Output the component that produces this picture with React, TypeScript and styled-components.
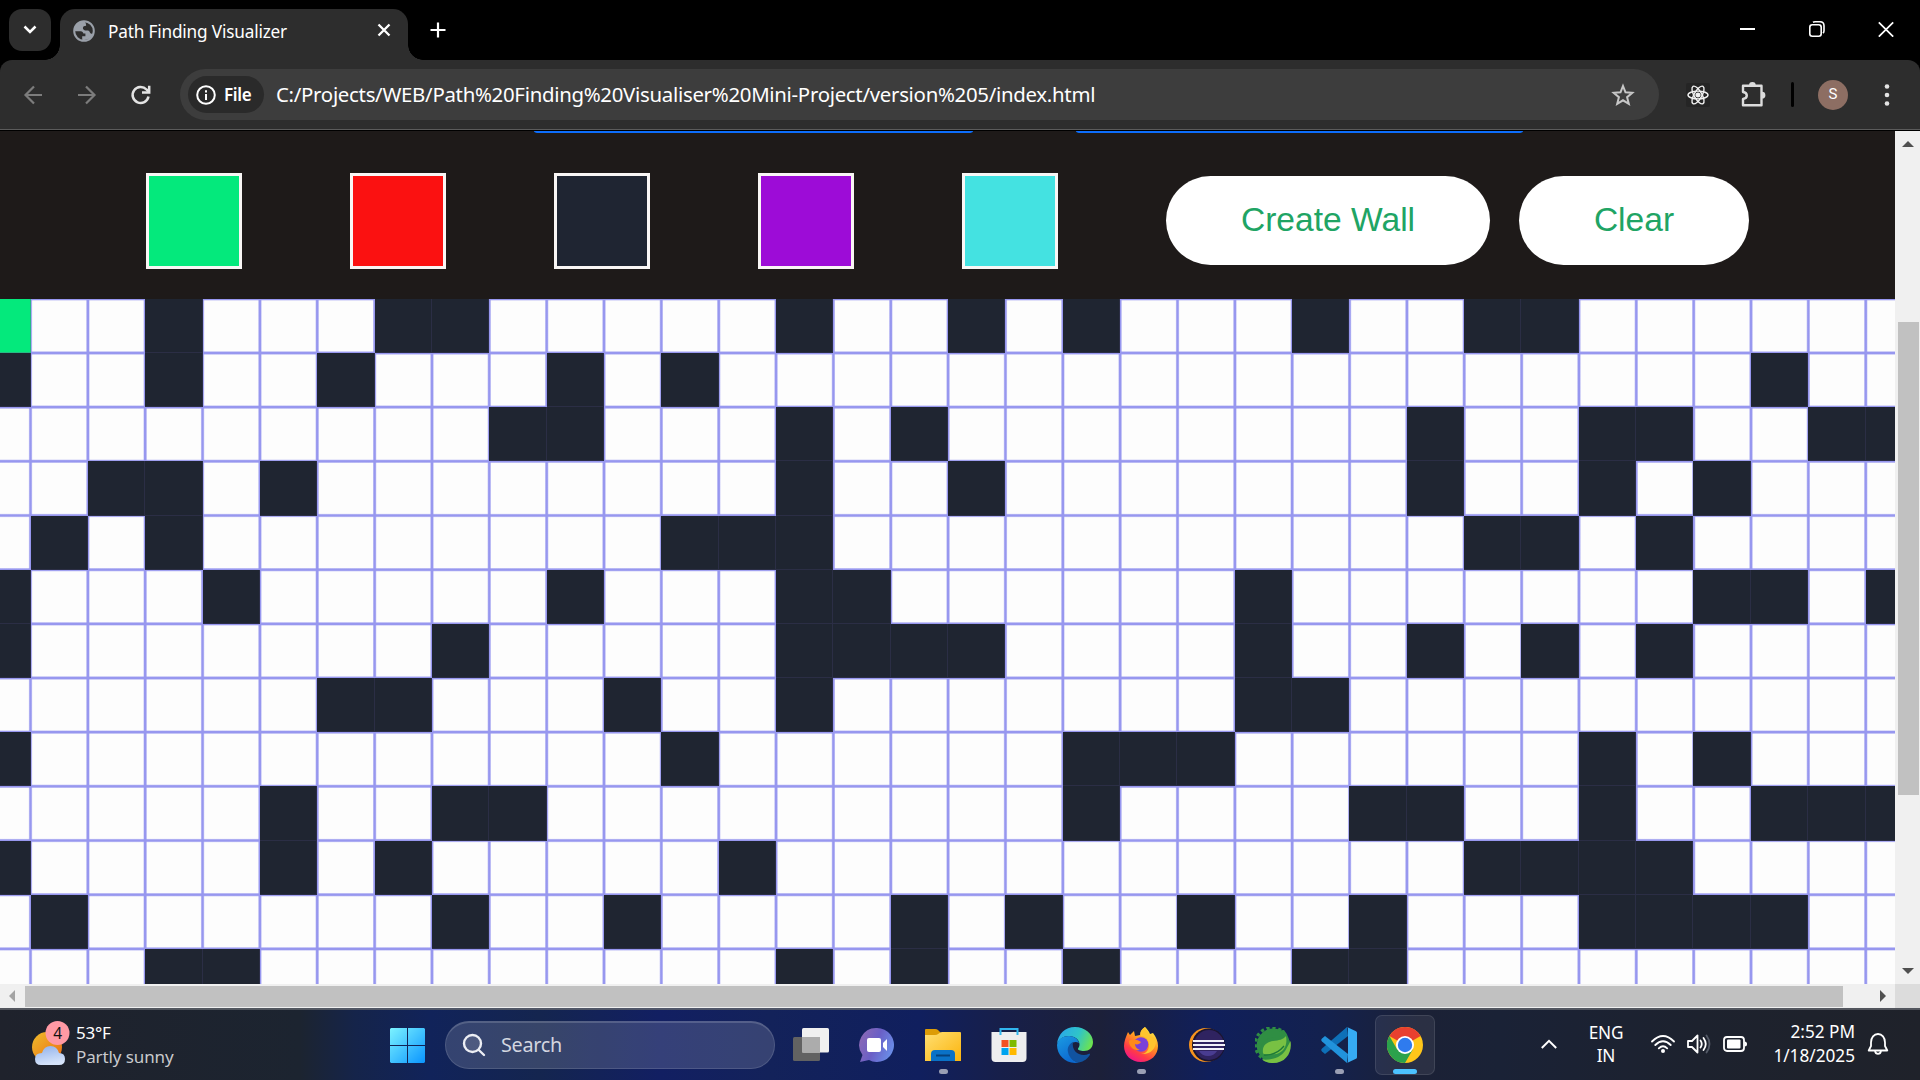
import React from "react";
import styled, { createGlobalStyle } from "styled-components";

const ui = `"Noto Sans", "Open Sans", sans-serif`;

const GlobalStyle = createGlobalStyle`
  * { box-sizing: border-box; }
  body { margin: 0; background: #000; overflow: hidden; }
  svg { display: block; flex: none; }
`;

const Screen = styled.div`
  width: 1920px;
  height: 1080px;
  display: flex;
  flex-direction: column;
  overflow: hidden;
  background: #000;
  font-family: ${ui};
`;

/* ---------- browser chrome ---------- */

const TabStrip = styled.div`
  height: 60px;
  flex: none;
  display: flex;
  padding: 9px 0 0 9px;
  color: #fff;
`;

const TabSearch = styled.div`
  width: 42px;
  height: 42px;
  border-radius: 13px;
  background: #2d2d2d;
  display: grid;
  place-items: center;
`;

const Tab = styled.div`
  position: relative;
  width: 348px;
  height: 51px;
  margin-left: 9px;
  padding: 0 16px 8px 13px;
  border-radius: 15px 15px 0 0;
  background: #2d2d2d;
  display: flex;
  align-items: center;
  &::before,
  &::after {
    content: "";
    position: absolute;
    bottom: 0;
    width: 15px;
    height: 15px;
  }
  &::before {
    left: -15px;
    background: radial-gradient(circle at 0 0, transparent 14.5px, #2d2d2d 15px);
  }
  &::after {
    right: -15px;
    background: radial-gradient(circle at 100% 0, transparent 14.5px, #2d2d2d 15px);
  }
`;

const TabTitle = styled.span`
  flex: 1;
  margin-left: 13px;
  padding-top: 3px;
  font-size: 17.2px;
  line-height: 24px;
  letter-spacing: -0.17px;
  white-space: nowrap;
`;

const NewTab = styled.div`
  margin: 13px 0 0 22px;
`;

const WindowControls = styled.div`
  margin: 12px 26px 0 auto;
  display: flex;
  gap: 53px;
`;

const Toolbar = styled.div`
  height: 71px;
  flex: none;
  display: flex;
  align-items: center;
  padding-bottom: 1px;
  background: #2d2d2d;
  border-top-left-radius: 12px;
  border-top-right-radius: 12px;
  border-bottom: 1px solid #000;
  box-shadow: inset 0 -1px 0 #5b5b5b;
`;

const NavButtons = styled.div`
  width: 180px;
  flex: none;
  display: flex;
  align-items: center;
  padding-left: 21px;
  gap: 28px;
`;

const Omnibox = styled.div`
  width: 1479px;
  height: 51px;
  flex: none;
  border-radius: 26px;
  background: #3d3d3d;
  display: flex;
  align-items: center;
  padding: 0 24px 0 8px;
  color: #fff;
`;

const FileChip = styled.div`
  width: 76px;
  height: 37px;
  border-radius: 19px;
  background: #2a2a2a;
  display: flex;
  align-items: center;
  padding-left: 8px;
  font-size: 17px;
  font-weight: 600;
  letter-spacing: -0.3px;
  gap: 8px;
`;

const Url = styled.span`
  flex: 1;
  margin-left: 12px;
  padding-bottom: 2px;
  font-size: 20.4px;
  letter-spacing: -0.29px;
  white-space: nowrap;
`;

const ToolbarActions = styled.div`
  flex: 1;
  display: flex;
  align-items: center;
  padding-left: 27px;
`;

const ExtensionBadge = styled.div`
  width: 24px;
  height: 24px;
  margin-right: 31px;
  background: #252525;
  border-radius: 2px;
  display: grid;
  place-items: center;
`;

const ToolbarDivider = styled.div`
  width: 3px;
  height: 25px;
  margin-left: 24px;
  border-radius: 2px;
  background: #000;
`;

const Avatar = styled.div`
  width: 30px;
  height: 30px;
  margin: 0 36px 0 24px;
  border-radius: 50%;
  background: #8d6e63;
  color: #fff;
  display: grid;
  place-items: center;
  font: 15px/1 Roboto, sans-serif;
`;

/* ---------- page ---------- */

const Viewport = styled.div`
  height: 877px;
  flex: none;
  display: grid;
  grid-template-columns: 1895px 25px;
  grid-template-rows: 853px 24px;
`;

const Page = styled.div`
  overflow: hidden;
  background: #1e1a19;
`;

const Header = styled.div`
  height: 168px;
`;

const ActionRow = styled.div`
  height: 2px;
  display: flex;
  gap: 103px;
  padding-left: 534px;
`;

const ActionEdge = styled.div<{ $width: number }>`
  width: ${(p) => p.$width}px;
  height: 2px;
  background: #0d6efd;
  border-radius: 0 0 5px 5px / 0 0 2px 2px;
`;

const Legend = styled.div`
  display: flex;
  align-items: center;
  padding: 40px 0 0 146px;
`;

const Swatch = styled.div<{ $color: string }>`
  width: 96px;
  height: 96px;
  margin-right: 108px;
  border: 3px solid #f9f6f5;
  background: ${(p) => p.$color};
`;

const PillButton = styled.button<{ $width: number }>`
  width: ${(p) => p.$width}px;
  height: 89px;
  margin: 0 29px 1px 0;
  padding: 0 0 1px;
  border: 0;
  border-radius: 45px;
  background: #fff;
  color: #20a464;
  font: 33.6px/1 "Liberation Sans", Arial, sans-serif;
`;

const line = "#9797ef";
const clear = "rgba(151, 151, 239, 0)";

const Board = styled.div`
  height: 685px;
  overflow: hidden;
  display: grid;
  grid-template-columns: 30.5px repeat(33, 57.35px);
  grid-template-rows: repeat(13, 54.17px);
  background-color: #fdfdfd;
  background-image:
    repeating-linear-gradient(90deg, ${line} 0 0.7px, ${clear} 2.1px 55.25px, ${line} 56.65px 57.35px),
    repeating-linear-gradient(180deg, ${line} 0 0.7px, ${clear} 2.1px 52.07px, ${line} 53.47px 54.17px);
  background-position: -26.85px 0, 0 -0.2px;
  background-size: 2000px 100%, 100% 800px;
`;

const Cell = styled.div<{ $row: number; $col: number; $start?: boolean }>`
  grid-row: ${(p) => p.$row + 1};
  grid-column: ${(p) => p.$col + 1};
  background: ${(p) => (p.$start ? "#04e97c" : "#1f2531")};
  box-shadow: inset -1px -1px 0 ${(p) => (p.$start ? "#28b985" : "#2b2e45")};
`;

const ScrollTrack = styled.div<{ $horizontal?: boolean }>`
  display: flex;
  flex-direction: ${(p) => (p.$horizontal ? "row" : "column")};
  align-items: center;
  justify-content: space-between;
  background: #f0f0f0;
  padding: ${(p) => (p.$horizontal ? "0 9px" : "10px 0")};
`;

const VThumb = styled.div`
  width: 21px;
  height: 473px;
  margin: 175px 0 auto 1px;
  background: #c1c1c1;
`;

const HThumb = styled.div`
  width: 1818px;
  height: 21px;
  margin: 1px auto 0 10px;
  background: #c1c1c1;
`;

const ScrollCorner = styled.div`
  background: #dcdcdc;
`;

/* ---------- taskbar ---------- */

const Taskbar = styled.div`
  flex: 1;
  display: flex;
  align-items: center;
  border-top: 2px solid rgba(96, 100, 108, 0.8);
  background: linear-gradient(
    90deg,
    #1f222c 0,
    #1c2430 300px,
    #15244a 355px,
    #11235a 430px,
    #14254f 540px,
    #121f62 660px,
    #13225a 770px,
    #101f5e 920px,
    #171f4a 1000px,
    #1c2039 1100px,
    #101f5b 1210px,
    #13214f 1320px,
    #1b2136 1420px,
    #1a2236 1500px,
    #1d222e 1700px,
    #1f222a 1920px
  );
  background-origin: border-box;
  color: #fff;
`;

const Weather = styled.div`
  width: 390px;
  display: flex;
  padding-left: 30px;
  gap: 6px;
`;

const WeatherText = styled.div`
  font-size: 17px;
  line-height: 24px;
  letter-spacing: -0.2px;
`;

const Muted = styled.div`
  color: #c9cacd;
  letter-spacing: -0.1px;
`;

const SearchBox = styled.div`
  width: 330px;
  height: 48px;
  margin-left: 20px;
  border-radius: 24px;
  border: 1px solid rgba(255, 255, 255, 0.12);
  border-top: 2px solid rgba(255, 255, 255, 0.16);
  background: rgba(255, 255, 255, 0.15);
  display: flex;
  align-items: center;
  padding: 0 0 2px 16px;
  gap: 15px;
  color: #d3d6e0;
  font-size: 19.8px;
  letter-spacing: -0.3px;
`;

const Apps = styled.div`
  display: flex;
  gap: 6px;
  margin-left: 6px;
`;

const AppTile = styled.div<{ $active?: boolean }>`
  position: relative;
  width: 60px;
  height: 60px;
  margin-bottom: 1px;
  display: grid;
  place-items: center;
  border-radius: 7px;
  border: 1px solid ${(p) => (p.$active ? "rgba(255,255,255,0.1)" : "transparent")};
  background: ${(p) => (p.$active ? "rgba(255,255,255,0.07)" : "transparent")};
`;

const Indicator = styled.div<{ $active?: boolean }>`
  position: absolute;
  bottom: 0;
  left: calc(50% - ${(p) => (p.$active ? 12 : 4.5)}px);
  width: ${(p) => (p.$active ? 24 : 9)}px;
  height: 5px;
  border-radius: 3px;
  background: ${(p) => (p.$active ? "#4cc2ff" : "#9a9fb4")};
`;

const Tray = styled.div`
  display: flex;
  flex: 1;
  align-items: center;
  justify-content: flex-end;
  padding: 0 31px 2px 0;
  font-size: 17.2px;
  line-height: 24px;
  letter-spacing: -0.25px;
`;

const Language = styled.div`
  width: 60px;
  margin: 0 15px 0 19px;
  text-align: center;
  line-height: 23px;
`;

const Status = styled.div`
  display: flex;
  gap: 12px;
`;

const Clock = styled.div`
  width: 108px;
  margin-right: 12px;
  text-align: right;
  letter-spacing: 0;
`;

const walls: number[][] = [
  [3, 7, 8, 14, 17, 19, 23, 26, 27],
  [0, 3, 6, 10, 12, 31],
  [9, 10, 14, 16, 25, 28, 29, 32, 33],
  [2, 3, 5, 14, 17, 25, 28, 30],
  [1, 3, 12, 13, 14, 26, 27, 29],
  [0, 4, 10, 14, 15, 22, 30, 31, 33],
  [0, 8, 14, 15, 16, 17, 22, 25, 27, 29],
  [6, 7, 11, 14, 22, 23],
  [0, 12, 19, 20, 21, 28, 30],
  [5, 8, 9, 19, 24, 25, 28, 31, 32, 33],
  [0, 5, 7, 13, 26, 27, 28, 29],
  [1, 8, 11, 16, 18, 21, 24, 28, 29, 30, 31],
  [3, 4, 14, 16, 19, 23, 24],
];

const swatches = ["#04e97c", "#fb1111", "#1f2532", "#9d0cd7", "#44e2e1"];

const Arrow = ({ dir, color = "#505050" }: { dir: "up" | "down" | "left" | "right"; color?: string }) => {
  const points = { up: "0,6 6,0 12,6", down: "0,0 12,0 6,6", left: "6,0 6,12 0,6", right: "0,0 6,6 0,12" }[dir];
  const tall = dir === "left" || dir === "right";
  return (
    <svg width={tall ? 6 : 12} height={tall ? 12 : 6}>
      <polygon points={points} fill={color} />
    </svg>
  );
};

const Globe = () => (
  <svg width="22" height="22" viewBox="0 0 22 22">
    <circle cx="11" cy="11" r="9.8" fill="#2d2d2d" stroke="#9aa0a9" strokeWidth="2" />
    <path d="M11.5 1.2C5 1 1 6 1.2 11.2h6.6c1.5.1 2.4 1 2.6 2.4h2v2.6H9.2v3.6c4.5 1 9.4-1.600 11.200-6.200-1.500.3-3 .1-3.600-1.400-.6-1.300-1.700-1.700-3.300-1.600-2.300-.1-3.700-1-3.600-2.600.1-1.600 1.300-2.200 3.200-2.300.2-1.500-.4-2.700-1.600-4.500z" fill="#9aa0a9" />
  </svg>
);

const Chat = () => (
  <svg width="36" height="36" viewBox="0 0 36 36">
    <defs>
      <linearGradient id="chat" x1="0" y1="0.2" x2="1" y2="0.6">
        <stop offset="0" stopColor="#8d69b4" />
        <stop offset="0.5" stopColor="#6a5fc6" />
        <stop offset="1" stopColor="#6a8ee8" />
      </linearGradient>
    </defs>
    <path d="M18 1a17 17 0 1 1-8 32L1 35l2.500-7A17 17 0 0 1 18 1z" fill="url(#chat)" />
    <rect x="8" y="11" width="14" height="14" rx="2" fill="#fff" />
    <path d="M24 16l4-4v12l-4-4z" fill="#fff" />
  </svg>
);

const Folder = () => (
  <svg width="36" height="36" viewBox="0 0 36 36">
    <defs>
      <linearGradient id="fold" x1="0" y1="0" x2="1" y2="1">
        <stop offset="0" stopColor="#ffdf73" />
        <stop offset="1" stopColor="#fbb40c" />
      </linearGradient>
    </defs>
    <path d="M0 3q0-1 1-1h9q2 0 3 1l3 3v4H0z" fill="#dd9c06" />
    <path d="M0 8h10q2 0 3.500-1.300T17 5h18q1 0 1 1v28H0z" fill="url(#fold)" />
    <path d="M6 34V27q0-4 4-4h16q4 0 4 4v7z" fill="#0a72c7" />
    <path d="M11 28.500h14" stroke="#06427c" strokeWidth="2" />
  </svg>
);

const Store = () => (
  <svg width="36" height="36" viewBox="0 0 36 36">
    <path d="M9.500 8V2h17v6" stroke="#31b6ee" strokeWidth="2" fill="none" />
    <path d="M.5 5h35v26q0 4-4 4h-27q-4 0-4-4z" fill="#eeeeef" />
    <path d="M9.500 8V5m17 3V5" stroke="#31b6ee" strokeWidth="2" />
    <path fill="#f25022" d="M10.500 13h7v7h-7z" />
    <path fill="#7fba00" d="M18.500 13h7v7h-7z" />
    <path fill="#00a4ef" d="M10.500 21h7v7h-7z" />
    <path fill="#ffb900" d="M18.500 21h7v7h-7z" />
  </svg>
);

const Edge = () => (
  <svg width="36" height="36" viewBox="0 0 36 36">
    <defs>
      <linearGradient id="edgeTop" x1="0" y1="0.3" x2="1" y2="0.6">
        <stop offset="0" stopColor="#2aa7ea" />
        <stop offset="0.55" stopColor="#2fc4c8" />
        <stop offset="1" stopColor="#6de34f" />
      </linearGradient>
      <linearGradient id="edgeLow" x1="0" y1="0" x2="0.5" y2="1">
        <stop offset="0" stopColor="#1b9be2" />
        <stop offset="1" stopColor="#0c69d0" />
      </linearGradient>
    </defs>
    <path d="M0 17C1 7 8 0 18 0s18 7 18 15c0 6-4 9-9 9-4 0-6.500-1-6-2.500 1-1.300 1.500-2.500 1.500-4C22.500 13 18 9 12 9 6 9 2 12 0 17z" fill="url(#edgeTop)" />
    <path d="M0 18C1 12 6 9 12 9c5 0 9 3 10 7-5-3-10 1-10 7 0 7 5 12 10 12.500C10 38 0 29 0 18z" fill="url(#edgeLow)" />
    <path d="M16 15c-4 2-6 6-5 10 1 6 6 10 11 10.500 5-1 9-4 11-8 .3-1-.4-1-1-.7C24 30.500 14 25 16 15z" fill="#1153a0" />
  </svg>
);

const Firefox = () => (
  <svg width="36" height="36" viewBox="0 0 36 36">
    <defs>
      <linearGradient id="ffx" x1="0.85" y1="0.05" x2="0.3" y2="1">
        <stop offset="0" stopColor="#fff24a" />
        <stop offset="0.4" stopColor="#ff9a1f" />
        <stop offset="0.75" stopColor="#ff3b47" />
        <stop offset="1" stopColor="#f0158a" />
      </linearGradient>
    </defs>
    <path d="M22 0c2 2 4 4 5 7l3-1c3 4 5 8 5 13 0 9-7 16-17 16S1 28 1 19c0-5 2-9 4-14l2 3 4-4 1 5 5-1c0-4 2-6 5-8z" fill="url(#ffx)" />
    <circle cx="18" cy="17.500" r="7.300" fill="#7a41d8" />
    <path d="M6 14c3-2 7-2 12 1-1 2-4 3-6 2 0 3 2 5 5 6-6 1-11-3-11-9z" fill="#ff8a1a" />
    <path d="M22 0c-4 3-5 6-4 9 5 0 8 4 8 9 0 6-4 9-8 9 9 1 15-5 15-13-1-2-2-3-3-4l-2 1c-1-4-4-6-6-11z" fill="#ffc52e" />
  </svg>
);

const Eclipse = () => (
  <svg width="36" height="36" viewBox="0 0 36 36">
    <circle cx="17" cy="18" r="17" fill="#f7941e" />
    <circle cx="19.500" cy="18" r="16.500" fill="#1b1530" />
    <circle cx="20" cy="18" r="15" fill="#2f2360" />
    <path d="M10 24h18q-3 5-9 5t-9-5z" fill="#493c90" />
    <path d="M4 14h31M4 18h32M4 22h31" stroke="#f1f1f7" strokeWidth="2" />
  </svg>
);

const Spring = () => (
  <svg width="36" height="36" viewBox="0 0 36 36">
    <path d="M29 3q3 3.500 4.500 8A16.700 16.700 0 1 1 26 3.300L29 3z" fill="#2f8e43" />
    <path d="M26 3.300A16.700 16.700 0 1 0 8 31.500" fill="none" stroke="#2f8e43" strokeWidth="3.200" strokeDasharray="3.200 2.700" />
    <path d="M8 16C11 11 17 10 23 10q4-1 6-4 4 4 6 9c1 11-7 21-17 21-4 0-8-1-10-3l-1-3C5 25 5 20 8 16z" fill="#2f8e43" />
    <path d="M8 26c-1-7 3-11 10-12 6-.5 10-1.500 13-5 1.500 8-1 15-8 17.500-5 1.500-10 .5-14 1z" fill="#78c143" />
    <path d="M35.500 14C37.500 25 31 36 18 36c-4 0-8-1-11-3.500 12 1 21-3 25-12q2-3.500 3.500-6.500z" fill="#78c143" />
    <path d="M9 28c8 .5 15-3 20-9" stroke="#1c7838" strokeWidth="1.300" fill="none" />
  </svg>
);

const VsCode = () => (
  <svg width="36" height="36" viewBox="0 0 36 36">
    <path d="M27 9L4 27 1 24.500Q-.5 23 1 21.500L26 0z" fill="#0e70b8" />
    <path d="M27 27L4 9 1 11.500Q-.5 13 1 14.500L26 36z" fill="#2193dc" />
    <path d="M26 0l9 4.300q1 .5 1 1.500v24.400q0 1-1 1.500L26 36q1-.5 1-2V2q0-1.500-1-2z" fill="#36abf3" />
  </svg>
);

const Chrome = () => (
  <svg width="36" height="36" viewBox="0 0 36 36">
    <circle cx="18" cy="18" r="18" fill="#ffc61a" />
    <path d="M18 18L2.410 9A18 18 0 0 1 33.590 9z" fill="#e8402f" />
    <path d="M2.410 9A18 18 0 0 0 18 36l7.800-13.500L10.200 22.500z" fill="#2ba24c" />
    <circle cx="18" cy="18" r="9" fill="#fff" />
    <circle cx="18" cy="18" r="7.200" fill="#2f7bee" />
  </svg>
);

const TaskView = () => (
  <svg width="36" height="36" viewBox="0 0 36 36">
    <rect x="0" y="10" width="27" height="24" rx="1.500" fill="#626262" />
    <rect x="9" y="1" width="27" height="24.500" rx="1.500" fill="#f0f0f0" />
    <path d="M9 10h18v15.500H9z" fill="#acacac" />
  </svg>
);

const apps: { icon: React.ReactNode; running?: boolean; active?: boolean }[] = [
  { icon: <TaskView /> },
  { icon: <Chat /> },
  { icon: <Folder />, running: true },
  { icon: <Store /> },
  { icon: <Edge /> },
  { icon: <Firefox />, running: true },
  { icon: <Eclipse /> },
  { icon: <Spring /> },
  { icon: <VsCode />, running: true },
  { icon: <Chrome />, running: true, active: true },
];

const WeatherIcon = () => (
  <svg width="40" height="48" viewBox="0 0 40 48">
    <defs>
      <linearGradient id="sun" x1="0" y1="0" x2="1" y2="1">
        <stop offset="0" stopColor="#eebd2c" />
        <stop offset="1" stopColor="#ec6a12" />
      </linearGradient>
      <linearGradient id="cloud" x1="0" y1="0" x2="0.3" y2="1">
        <stop offset="0" stopColor="#8fb0ea" />
        <stop offset="1" stopColor="#d5e3fa" />
      </linearGradient>
    </defs>
    <circle cx="17" cy="26" r="15" fill="url(#sun)" />
    <path d="M11 44q-6 0-6-6t7-6q2-7 8.500-7t8.500 7q6 0 6 6t-6 6z" fill="url(#cloud)" />
    <circle cx="27.500" cy="12" r="12" fill="#ff99a4" />
    <text x="27.800" y="17.500" textAnchor="middle" fontSize="15.500" fill="#111" fontFamily="Noto Sans, sans-serif">4</text>
  </svg>
);

export default function App() {
  return (
    <Screen>
      <GlobalStyle />
      <TabStrip>
        <TabSearch>
          <svg width="14" height="10" fill="none" stroke="#fff" strokeWidth="2.500">
            <path d="M1.500 1.500L7 7l5.500-5.500" />
          </svg>
        </TabSearch>
        <Tab>
          <Globe />
          <TabTitle>Path Finding Visualizer</TabTitle>
          <svg width="16" height="16" stroke="#fff" strokeWidth="2.300">
            <path d="M2.500 1.500l11 11m0-11l-11 11" />
          </svg>
        </Tab>
        <NewTab>
          <svg width="16" height="16" stroke="#fff" strokeWidth="2.200">
            <path d="M8 .5v15M.5 8h15" />
          </svg>
        </NewTab>
        <WindowControls>
          <svg width="16" height="16"><path d="M0 8h15" stroke="#fff" strokeWidth="2" /></svg>
          <svg width="16" height="16" fill="none" stroke="#fff" strokeWidth="1.600">
            <rect x=".8" y="3.800" width="11.400" height="11.400" rx="2.500" />
            <path d="M4 1.300q.8-.5 2-.5h5q4 0 4 4v5q0 1.500-1 2.400" />
          </svg>
          <svg width="16" height="16" stroke="#fff" strokeWidth="1.700"><path d="M.8 1.300l14.400 14.400m0-14.400L.8 15.700" /></svg>
        </WindowControls>
      </TabStrip>

      <Toolbar>
        <NavButtons>
          <svg width="25" height="24" fill="none" stroke="#7c7c7c" strokeWidth="2.200"><path d="M21 12H5m8-8.500L4.500 12l8.500 8.500" /></svg>
          <svg width="25" height="24" fill="none" stroke="#7c7c7c" strokeWidth="2.200"><path d="M4 12h16m-8-8.500l8.500 8.500-8.500 8.500" /></svg>
          <svg width="25" height="24" fill="none" stroke="#e3e3e3" strokeWidth="2.500">
            <path d="M21.500 13.500A8 8 0 1 1 19.500 6.500L22 9" />
            <path d="M22.200 2.800V9.600h-7.200" />
          </svg>
        </NavButtons>
        <Omnibox>
          <FileChip>
            <svg width="20" height="20" fill="none" stroke="#fff" strokeWidth="2">
              <circle cx="10" cy="10" r="8.800" />
              <path d="M10 9v6M10 5.200v2.200" />
            </svg>
            File
          </FileChip>
          <Url>C:/Projects/WEB/Path%20Finding%20Visualiser%20Mini-Project/version%205/index.html</Url>
          <svg width="24" height="24" viewBox="0 0 24 24" fill="none" stroke="#c7c7c7" strokeWidth="2">
            <path d="M12 3l2.500 6.300 6.800.5-5.200 4.400 1.700 6.700-5.800-3.600-5.800 3.600 1.700-6.700-5.200-4.400 6.800-.5z" />
          </svg>
        </Omnibox>
        <ToolbarActions>
          <ExtensionBadge>
            <svg width="22" height="22" viewBox="-11 -11 22 22" fill="none" stroke="#f2f2f2" strokeWidth="1.400">
              <ellipse rx="10" ry="3.900" />
              <ellipse rx="10" ry="3.900" transform="rotate(60)" />
              <ellipse rx="10" ry="3.900" transform="rotate(120)" />
              <circle r="1.900" fill="#f2f2f2" />
            </svg>
          </ExtensionBadge>
          <svg width="26" height="26" viewBox="0 1 26 26">
            <path d="M2 4.800h18.500v19.400H2V18q3.800-.6 3.800-3.500T2 11z" fill="none" stroke="#dcdcdc" strokeWidth="2.400" strokeLinejoin="round" />
            <path d="M8 4.500a3.400 3.400 0 0 1 6.800 0zM21 10.800a3.400 3.400 0 0 1 0 6.800z" fill="#dcdcdc" />
          </svg>
          <ToolbarDivider />
          <Avatar>S</Avatar>
          <svg width="6" height="24" fill="#e3e3e3">
            <circle cx="3" cy="3.500" r="2.300" /><circle cx="3" cy="12" r="2.300" /><circle cx="3" cy="20.500" r="2.300" />
          </svg>
        </ToolbarActions>
      </Toolbar>

      <Viewport>
        <Page>
          <Header>
            <ActionRow>
              <ActionEdge $width={439} />
              <ActionEdge $width={447} />
            </ActionRow>
            <Legend>
              {swatches.map((c) => <Swatch key={c} $color={c} />)}
              <PillButton $width={324}>Create Wall</PillButton>
              <PillButton $width={230}>Clear</PillButton>
            </Legend>
          </Header>
          <Board>
            <Cell $row={0} $col={0} $start />
            {walls.flatMap((cols, r) => cols.map((c) => <Cell key={`${r}-${c}`} $row={r} $col={c} />))}
          </Board>
        </Page>
        <ScrollTrack>
          <Arrow dir="up" />
          <VThumb />
          <Arrow dir="down" />
        </ScrollTrack>
        <ScrollTrack $horizontal>
          <Arrow dir="left" color="#a3a3a3" />
          <HThumb />
          <Arrow dir="right" />
        </ScrollTrack>
        <ScrollCorner />
      </Viewport>

      <Taskbar>
        <Weather>
          <WeatherIcon />
          <WeatherText>
            <div>53°F</div>
            <Muted>Partly sunny</Muted>
          </WeatherText>
        </Weather>
        <svg width="35" height="35" viewBox="0 0 35 35">
          <defs>
            <linearGradient id="win" gradientUnits="userSpaceOnUse" x1="0" y1="0" x2="35" y2="35">
              <stop offset="0" stopColor="#7cf3ff" />
              <stop offset="1" stopColor="#0a95ff" />
            </linearGradient>
          </defs>
          <path d="M1 0h16v17H0V1zM18 0h16l1 1v16H18zM0 18h17v17H1l-1-1zM18 18h17v16l-1 1H18z" fill="url(#win)" />
        </svg>
        <SearchBox>
          <svg width="24" height="24" fill="rgba(255,255,255,0.12)" stroke="#eceef4" strokeWidth="2.400" strokeLinecap="round">
            <circle cx="10.500" cy="10.500" r="8.500" />
            <path d="M16.800 17l5.200 5" />
          </svg>
          Search
        </SearchBox>
        <Apps>
          {apps.map((a, i) => (
            <AppTile key={i} $active={a.active}>
              {a.icon}
              {a.running && <Indicator $active={a.active} />}
            </AppTile>
          ))}
        </Apps>
        <Tray>
          <svg width="16" height="10" fill="none" stroke="#fff" strokeWidth="2"><path d="M.8 9L8 1.800 15.200 9" /></svg>
          <Language>
            <div>ENG</div>
            <div>IN</div>
          </Language>
          <Status>
            <svg width="24" height="20" fill="none" stroke="#fff" strokeWidth="1.800" strokeLinecap="round">
              <path d="M1 7.500q11-11 22 0M4.300 11q7.700-7.500 15.400 0M7.800 14.300q4.200-4 8.400 0" />
              <circle cx="12" cy="17" r="2" fill="#fff" stroke="none" />
            </svg>
            <svg width="24" height="20" fill="none" stroke="#fff" strokeWidth="1.800" strokeLinecap="round" strokeLinejoin="round">
              <path d="M1 7h4l5.500-5.500v17L5 13H1z" />
              <path d="M13.500 6.500q2.500 3.500 0 7M16.500 4q4.500 6 0 12" />
              <path d="M19.500 1.500q6 8.500 0 17" stroke="#555b68" />
            </svg>
            <svg width="24" height="20">
              <rect x="1" y="3" width="20" height="14" rx="3" fill="none" stroke="#fff" strokeWidth="1.800" />
              <rect x="4" y="5.500" width="13.500" height="9" rx="1" fill="#fff" />
              <path d="M21.500 7.500q2.500 0 2.500 2.500t-2.500 2.500z" fill="#fff" />
            </svg>
          </Status>
          <Clock>
            <div>2:52 PM</div>
            <div>1/18/2025</div>
          </Clock>
          <svg width="22" height="24" fill="none" stroke="#fff" strokeWidth="1.800" strokeLinejoin="round">
            <path d="M4 10.500C4 5.500 7 2 11 2s7 3.500 7 8.500V14l2.300 4.500H1.700L4 14z" />
            <path d="M8 19q.5 2.800 3 2.800t3-2.800" />
          </svg>
        </Tray>
      </Taskbar>
    </Screen>
  );
}
